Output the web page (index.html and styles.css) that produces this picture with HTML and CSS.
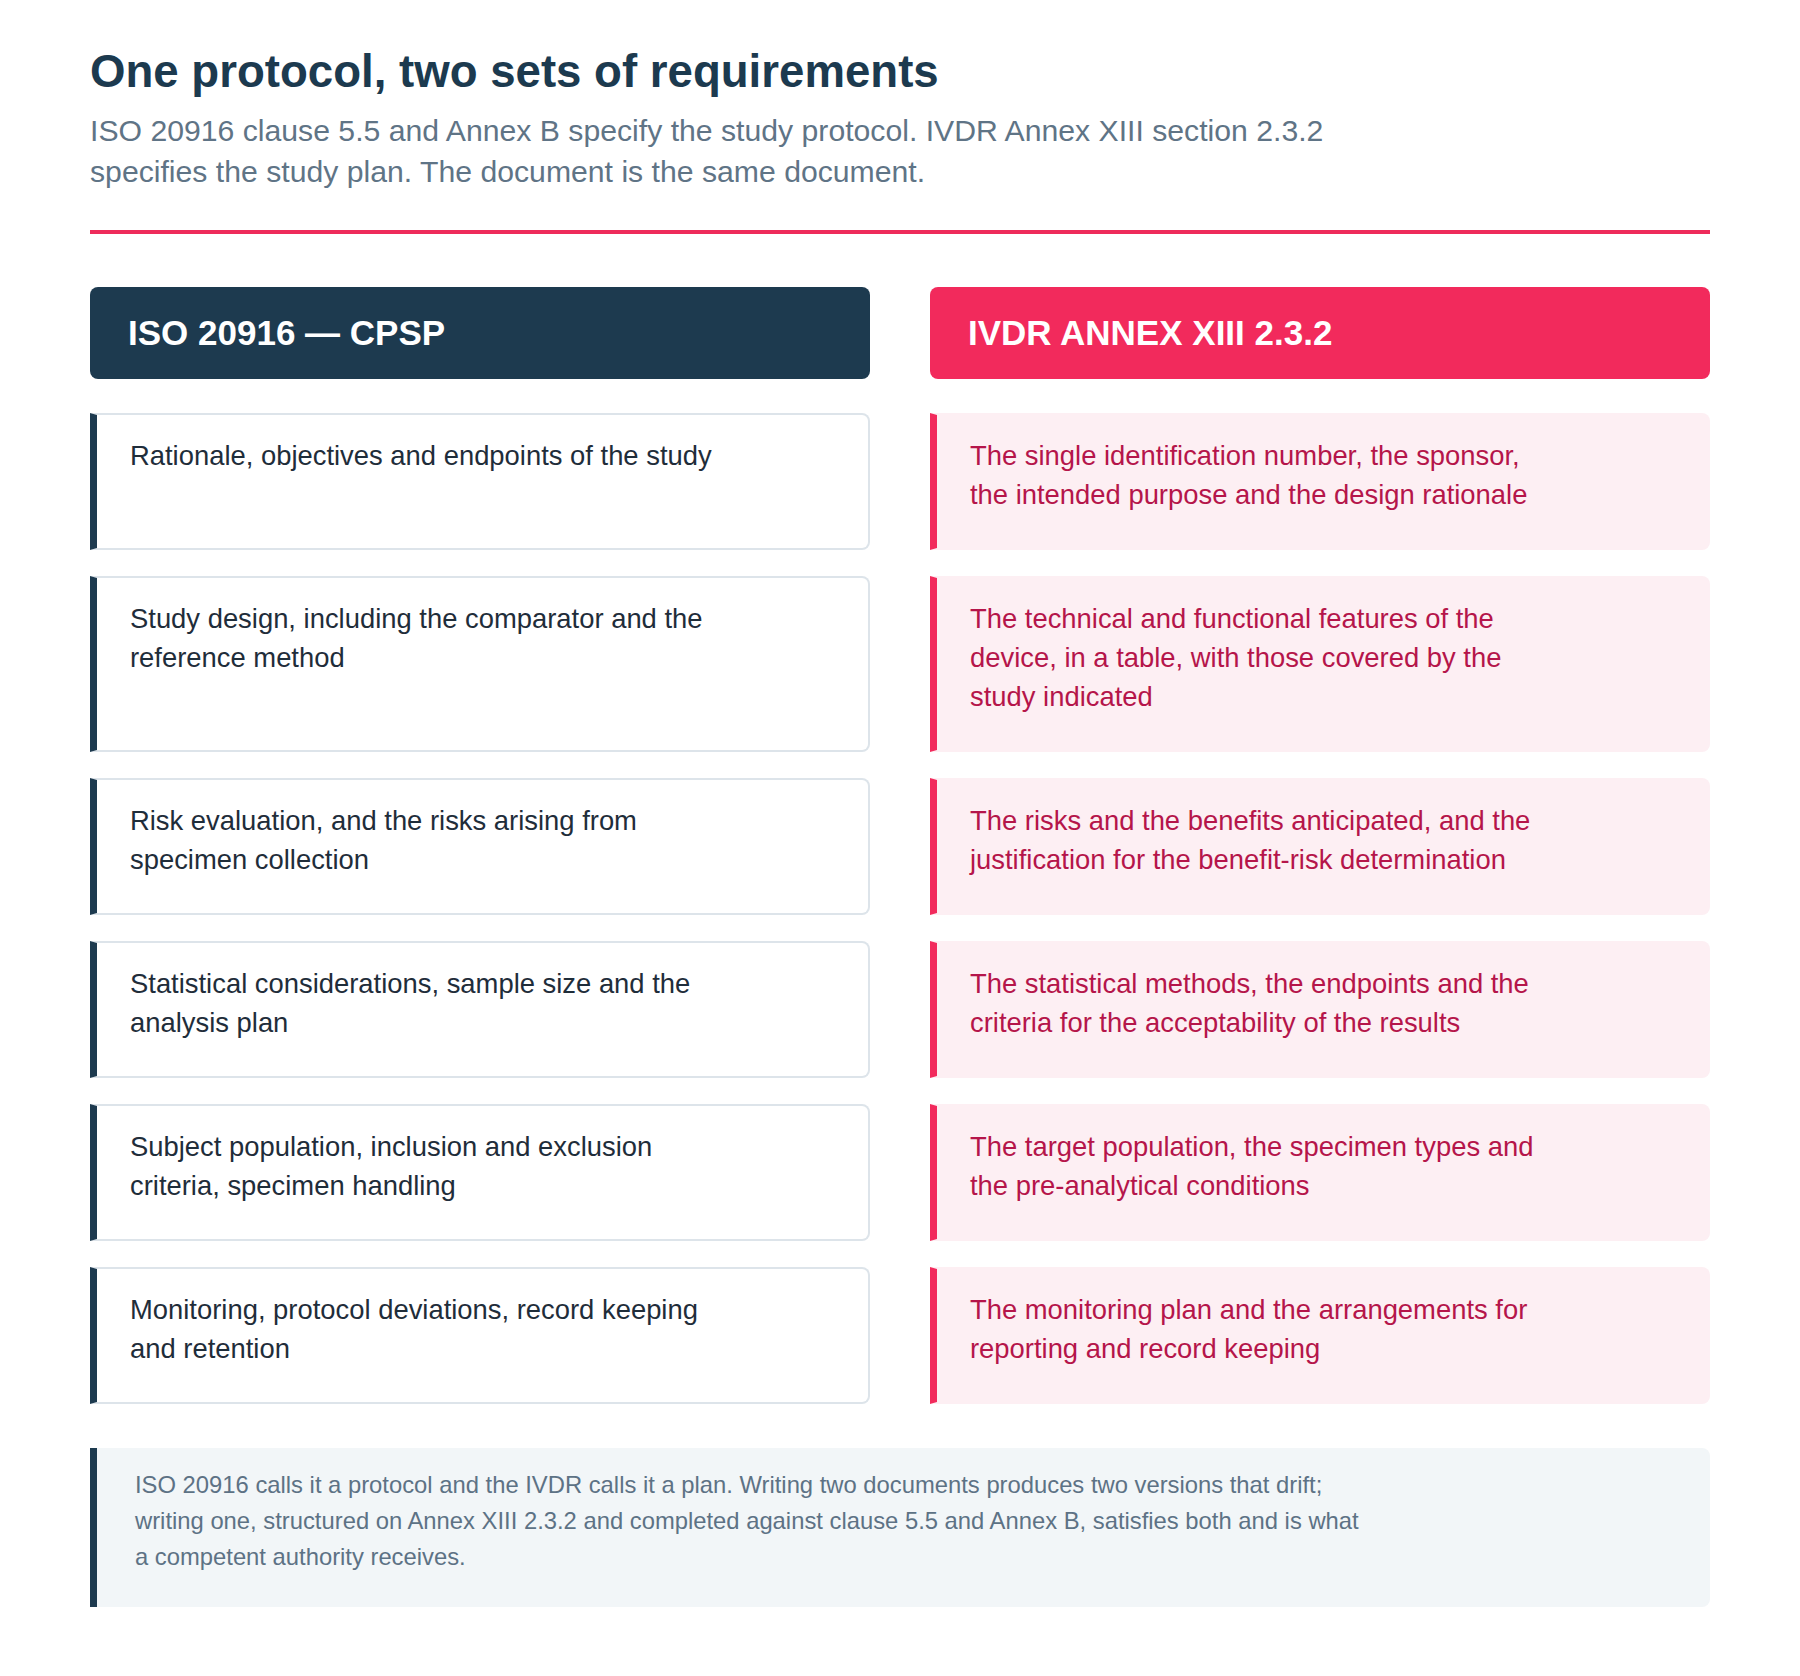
FILE: index.html
```html
<!DOCTYPE html>
<html lang="en">
<head>
    <meta charset="UTF-8">
    <meta name="viewport" content="width=device-width, initial-scale=1.0">
    <title>One protocol, two sets of requirements</title>
    <link rel="stylesheet" href="styles.css">
</head>
<body>
    <div class="page">

        <!-- Intro -->
        <div class="intro">
            <h1>One protocol, two sets of requirements</h1>
            <p class="subtitle">ISO 20916 clause 5.5 and Annex B specify the study protocol. IVDR Annex XIII section 2.3.2 specifies the study plan. The document is the same document.</p>
        </div>

        <!-- Side by side comparison -->
        <div class="compare">
            <div class="col-head iso-head">ISO 20916 — CPSP</div>
            <div class="col-head ivdr-head">IVDR ANNEX XIII 2.3.2</div>

            <div class="item iso-item"><p>Rationale, objectives and endpoints of the study</p></div>
            <div class="item ivdr-item"><p>The single identification number, the sponsor, the intended purpose and the design rationale</p></div>

            <div class="item iso-item"><p>Study design, including the comparator and the reference method</p></div>
            <div class="item ivdr-item"><p>The technical and functional features of the device, in a table, with those covered by the study indicated</p></div>

            <div class="item iso-item"><p>Risk evaluation, and the risks arising from specimen collection</p></div>
            <div class="item ivdr-item"><p>The risks and the benefits anticipated, and the justification for the benefit-risk determination</p></div>

            <div class="item iso-item"><p>Statistical considerations, sample size and the analysis plan</p></div>
            <div class="item ivdr-item"><p>The statistical methods, the endpoints and the criteria for the acceptability of the results</p></div>

            <div class="item iso-item"><p>Subject population, inclusion and exclusion criteria, specimen handling</p></div>
            <div class="item ivdr-item"><p>The target population, the specimen types and the pre-analytical conditions</p></div>

            <div class="item iso-item"><p>Monitoring, protocol deviations, record keeping and retention</p></div>
            <div class="item ivdr-item"><p>The monitoring plan and the arrangements for reporting and record keeping</p></div>
        </div>

        <!-- Closing note -->
        <div class="note">
            <p>ISO 20916 calls it a protocol and the IVDR calls it a plan. Writing two documents produces two versions that drift; writing one, structured on Annex XIII 2.3.2 and completed against clause 5.5 and Annex B, satisfies both and is what a competent authority receives.</p>
        </div>

    </div>
</body>
</html>
```

FILE: styles.css
```css
* {
    margin: 0;
    padding: 0;
    box-sizing: border-box;
}

body {
    background: #ffffff;
    font-family: 'Liberation Sans', Arial, Helvetica, sans-serif;
    color: #1f2d3a;
}

.page {
    padding: 45px 90px 70px;
}

.intro {
    padding-bottom: 38px;
    border-bottom: 4px solid #ee2b5b;
}

h1 {
    font-size: 45.6px;
    line-height: 1.2;
    font-weight: bold;
    color: #1c3a4f;
}

.subtitle {
    margin-top: 10px;
    max-width: 1240px;
    font-size: 30.2px;
    line-height: 41px;
    color: #5f7486;
}

.compare {
    display: grid;
    grid-template-columns: 1fr 1fr;
    column-gap: 60px;
    row-gap: 26px;
    margin-top: 53px;
}

.col-head {
    height: 92px;
    display: flex;
    align-items: center;
    padding: 0 38px;
    margin-bottom: 8px;
    border-radius: 8px;
    font-size: 35px;
    font-weight: bold;
    color: #ffffff;
}

.iso-head {
    background: #1d3a4f;
}

.ivdr-head {
    background: #f22a5c;
}

.item {
    padding: 21px 40px 34px 33px;
    border-radius: 0 8px 8px 0;
    font-size: 27.4px;
    line-height: 39px;
}

.item p {
    max-width: 590px;
}

.iso-item {
    background: #ffffff;
    border: 2px solid #dde4ea;
    border-left: 7px solid #1d3a4f;
    color: #1f2d3a;
}

.ivdr-item {
    background: #fdeff3;
    border: 2px solid #fdeff3;
    border-left: 7px solid #f22a5c;
    color: #b5154a;
}

.note {
    margin-top: 44px;
    padding: 19px 40px 32px 38px;
    background: #f2f6f8;
    border-left: 7px solid #1d3a4f;
    border-radius: 0 8px 8px 0;
    font-size: 23.8px;
    line-height: 36px;
    color: #5d7285;
}

.note p {
    max-width: 1240px;
}
```
